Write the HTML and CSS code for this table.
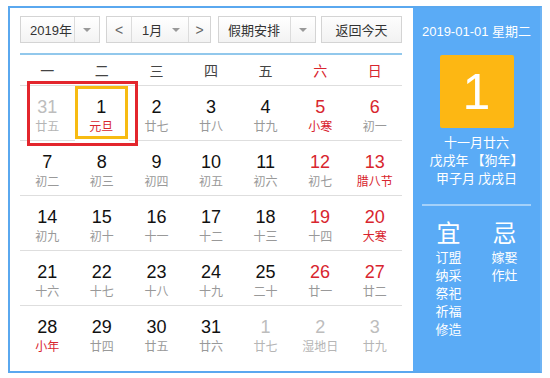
FILE: index.html
```html
<!DOCTYPE html>
<html lang="zh-CN">
<head>
<meta charset="utf-8">
<link rel="stylesheet" href="styles.css">
</head>
<body>
<div class="frame">
  <div class="main">
    <div class="toolbar">
      <div class="sel sel-year"><span class="sel-text">2019年</span><span class="sel-arrow"><i class="tri"></i></span></div>
      <div class="month-group">
        <span class="nav">&lt;</span>
        <span class="month"><span class="sel-text">1月</span><i class="tri"></i></span>
        <span class="nav">&gt;</span>
      </div>
      <div class="sel sel-holiday"><span class="sel-text">假期安排</span><span class="sel-arrow"><i class="tri"></i></span></div>
      <div class="btn-today">返回今天</div>
    </div>
    <div class="weekdays">
      <span>一</span><span>二</span><span>三</span><span>四</span><span>五</span><span class="red">六</span><span class="red">日</span>
    </div>
    <div class="grid">
      <div class="mark"></div>
      <div class="cell other"><b>31</b><small>廿五</small></div>
      <div class="cell selected"><b>1</b><small class="red">元旦</small></div>
      <div class="cell"><b>2</b><small>廿七</small></div>
      <div class="cell"><b>3</b><small>廿八</small></div>
      <div class="cell"><b>4</b><small>廿九</small></div>
      <div class="cell wk"><b>5</b><small class="red">小寒</small></div>
      <div class="cell wk"><b>6</b><small>初一</small></div>

      <div class="cell"><b>7</b><small>初二</small></div>
      <div class="cell"><b>8</b><small>初三</small></div>
      <div class="cell"><b>9</b><small>初四</small></div>
      <div class="cell"><b>10</b><small>初五</small></div>
      <div class="cell"><b>11</b><small>初六</small></div>
      <div class="cell wk"><b>12</b><small>初七</small></div>
      <div class="cell wk"><b>13</b><small class="red">腊八节</small></div>

      <div class="cell"><b>14</b><small>初九</small></div>
      <div class="cell"><b>15</b><small>初十</small></div>
      <div class="cell"><b>16</b><small>十一</small></div>
      <div class="cell"><b>17</b><small>十二</small></div>
      <div class="cell"><b>18</b><small>十三</small></div>
      <div class="cell wk"><b>19</b><small>十四</small></div>
      <div class="cell wk"><b>20</b><small class="red">大寒</small></div>

      <div class="cell"><b>21</b><small>十六</small></div>
      <div class="cell"><b>22</b><small>十七</small></div>
      <div class="cell"><b>23</b><small>十八</small></div>
      <div class="cell"><b>24</b><small>十九</small></div>
      <div class="cell"><b>25</b><small>二十</small></div>
      <div class="cell wk"><b>26</b><small>廿一</small></div>
      <div class="cell wk"><b>27</b><small>廿二</small></div>

      <div class="cell last"><b>28</b><small class="red">小年</small></div>
      <div class="cell last"><b>29</b><small>廿四</small></div>
      <div class="cell last"><b>30</b><small>廿五</small></div>
      <div class="cell last"><b>31</b><small>廿六</small></div>
      <div class="cell last other"><b>1</b><small>廿七</small></div>
      <div class="cell last other"><b>2</b><small>湿地日</small></div>
      <div class="cell last other"><b>3</b><small>廿九</small></div>
    </div>
  </div>
  <div class="side">
    <div class="side-date">2019-01-01 星期二</div>
    <div class="bigday">1</div>
    <div class="lunar">
      <div>十一月廿六</div>
      <div>戊戌年 【狗年】</div>
      <div>甲子月 戊戌日</div>
    </div>
    <div class="divider"></div>
    <div class="yiji">
      <div class="col">
        <div class="head">宜</div>
        <div>订盟</div><div>纳采</div><div>祭祀</div><div>祈福</div><div>修造</div>
      </div>
      <div class="col">
        <div class="head">忌</div>
        <div>嫁娶</div><div>作灶</div>
      </div>
    </div>
  </div>
</div>
</body>
</html>
```

FILE: styles.css
```css
* { box-sizing: border-box; }
html, body { margin: 0; padding: 0; background: #fff; }
body {
  font-family: "Liberation Sans", "Noto Sans CJK SC", sans-serif;
  color: #222;
  padding: 6px 0 0 8px;
}
.frame {
  width: 534px;
  height: 367px;
  border: 2px solid #5aa8ef;
  border-right-color: #6fb4f4;
  display: flex;
  background: #fff;
}
.main {
  width: 403px;
  padding: 8px 11px 0 10px;
}
.toolbar {
  display: flex;
  height: 27px;
  align-items: stretch;
  font-size: 13px;
  color: #333;
}
.sel, .month-group, .btn-today {
  border: 1px solid #d4d4d4;
  background: linear-gradient(#ffffff, #f3f3f3);
  display: flex;
  align-items: center;
}
.sel-text { padding-left: 9px; flex: 1; }
.sel-arrow {
  width: 25px;
  height: 100%;
  border-left: 1px solid #dcdcdc;
  display: flex;
  align-items: center;
  justify-content: center;
}
.tri {
  display: inline-block;
  width: 0; height: 0;
  border-left: 4px solid transparent;
  border-right: 4px solid transparent;
  border-top: 4px solid #999;
}
.sel-year { width: 80px; }
.month-group { width: 105px; margin-left: 6px; }
.nav {
  width: 25px;
  height: 100%;
  display: flex;
  align-items: center;
  justify-content: center;
  color: #666;
  font-size: 14px;
}
.nav:last-child { width: 22px; border-left: 1px solid #dcdcdc; }
.nav:first-child { border-right: 1px solid #dcdcdc; }
.month {
  flex: 1;
  display: flex;
  align-items: center;
  padding-right: 8px;
}
.month .sel-text { padding-left: 10px; }
.sel-holiday { width: 98px; margin-left: 7px; }
.btn-today {
  width: 81px;
  margin-left: 5px;
  justify-content: center;
  background: linear-gradient(#fdfdfd, #f2f2f2);
}
.weekdays {
  margin-top: 10px;
  border-top: 2px solid #92c8ec;
  border-bottom: 1px solid #dedede;
  height: 33px;
  display: grid;
  grid-template-columns: repeat(7, 1fr);
  align-items: center;
  text-align: center;
  font-family: "Noto Sans CJK SC", sans-serif;
  font-size: 14px;
  color: #444;
}
.red { color: #d8252e !important; }
.grid {
  position: relative;
  display: grid;
  grid-template-columns: repeat(7, 1fr);
  grid-auto-rows: 55px;
}
.cell {
  border-bottom: 1px solid #dedede;
  text-align: center;
  display: flex;
  flex-direction: column;
  align-items: center;
  padding-top: 10px;
}
.cell.last { border-bottom: none; }
.cell b {
  font-weight: normal;
  font-size: 18px;
  line-height: 22px;
  color: #111;
}
.cell small {
  font-family: "Noto Sans CJK SC", sans-serif;
  font-size: 12px;
  line-height: 18px;
  color: #999;
  margin-top: -1px;
}
.cell.wk b { color: #d8252e; }
.cell.other b { color: #bdbdbd; }
.cell.other small { color: #b5b5b5; }
.cell.selected {
  border: 3px solid #f7bb12;
  margin: 0 1px 2px 0;
  padding-top: 7px;
}
.mark {
  position: absolute;
  left: 7px;
  top: -5px;
  width: 111px;
  height: 65px;
  border: 3px solid #e3262d;
  pointer-events: none;
  z-index: 2;
}
.side {
  flex: 1;
  background: #5aabf6;
  color: #fff;
  display: flex;
  flex-direction: column;
  align-items: center;
  font-family: "Noto Sans CJK SC", sans-serif;
}
.side-date {
  margin-top: 15px;
  font-family: "Liberation Sans", "Noto Sans CJK SC", sans-serif;
  font-size: 13px;
  line-height: 18px;
}
.bigday {
  margin-top: 14px;
  width: 74px;
  height: 73px;
  background: #fdb713;
  border-radius: 2px;
  display: flex;
  align-items: center;
  justify-content: center;
  font-family: "Liberation Sans", sans-serif;
  font-size: 50px;
  line-height: 1;
}
.lunar {
  margin-top: 5px;
  font-size: 13px;
  line-height: 18px;
  text-align: center;
}
.divider {
  margin-top: 17px;
  width: 109px;
  border-top: 2px solid rgba(255,255,255,0.45);
}
.yiji {
  display: flex;
  gap: 30px;
  margin-top: 10px;
  font-size: 13px;
  line-height: 18px;
}
.col { display: flex; flex-direction: column; align-items: center; width: 26px; }
.col .head {
  font-size: 24px;
  line-height: 32px;
  margin-bottom: 0;
}
```
